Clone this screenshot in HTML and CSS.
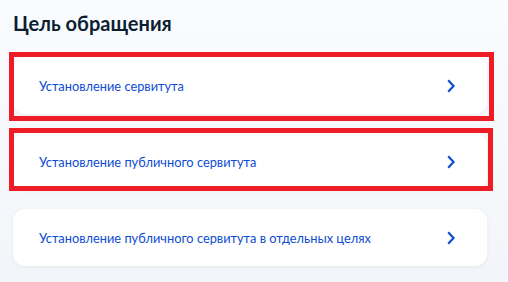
FILE: index.html
```html
<!DOCTYPE html>
<html lang="ru">
<head>
  <meta charset="UTF-8">
  <meta name="viewport" content="width=device-width, initial-scale=1.0">
  <title>Цель обращения</title>
  <link rel="stylesheet" href="styles.css">
</head>
<body>
  <section class="purpose">
    <h2 class="purpose-title">Цель обращения</h2>
    <div class="choice-list">
      <a class="choice marked marked-first" href="#">
        <span class="choice-text">Установление сервитута</span>
        <svg class="chevron" width="8" height="14" viewBox="0 0 8 14"><polyline points="1.2,1.2 6.6,7 1.2,12.8" fill="none" stroke="#0d4cd3" stroke-width="2.2"/></svg>
      </a>
      <a class="choice marked marked-second" href="#">
        <span class="choice-text">Установление публичного сервитута</span>
        <svg class="chevron" width="8" height="14" viewBox="0 0 8 14"><polyline points="1.2,1.2 6.6,7 1.2,12.8" fill="none" stroke="#0d4cd3" stroke-width="2.2"/></svg>
      </a>
      <a class="choice" href="#">
        <span class="choice-text">Установление публичного сервитута в отдельных целях</span>
        <svg class="chevron" width="8" height="14" viewBox="0 0 8 14"><polyline points="1.2,1.2 6.6,7 1.2,12.8" fill="none" stroke="#0d4cd3" stroke-width="2.2"/></svg>
      </a>
    </div>
  </section>
</body>
</html>
```

FILE: styles.css
```css
* {
  box-sizing: border-box;
}
body {
  margin: 0;
  height: 282px;
  overflow: hidden;
  background: linear-gradient(180deg, #fafbfe 0%, #f3f5fa 100%);
  font-family: Lato, "Liberation Sans", sans-serif;
  color: #0b1f33;
}
.purpose {
  padding: 11px 21px 0 13px;
}
.purpose-title {
  margin: 0;
  font-size: 20px;
  line-height: 24px;
  font-weight: 700;
}
.choice-list {
  display: flex;
  flex-direction: column;
  gap: 19px;
  margin-top: 22px;
}
.choice {
  position: relative;
  display: flex;
  align-items: center;
  justify-content: space-between;
  height: 57px;
  padding: 0 32px 0 26px;
  background: #fff;
  border-radius: 12px;
  box-shadow: 0 1px 4px rgba(11, 31, 51, 0.06);
  text-decoration: none;
}
.choice-text {
  font-size: 12.8px;
  color: #0d4cd3;
}
.chevron {
  flex: none;
}
.marked::after {
  content: "";
  position: absolute;
  border: 5px solid #ee1d25;
}
.marked-first::after {
  top: -5px;
  left: -4px;
  right: -7px;
  bottom: -7px;
}
.marked-second::after {
  top: -5px;
  left: -4px;
  right: -6px;
  bottom: -1px;
}
```
